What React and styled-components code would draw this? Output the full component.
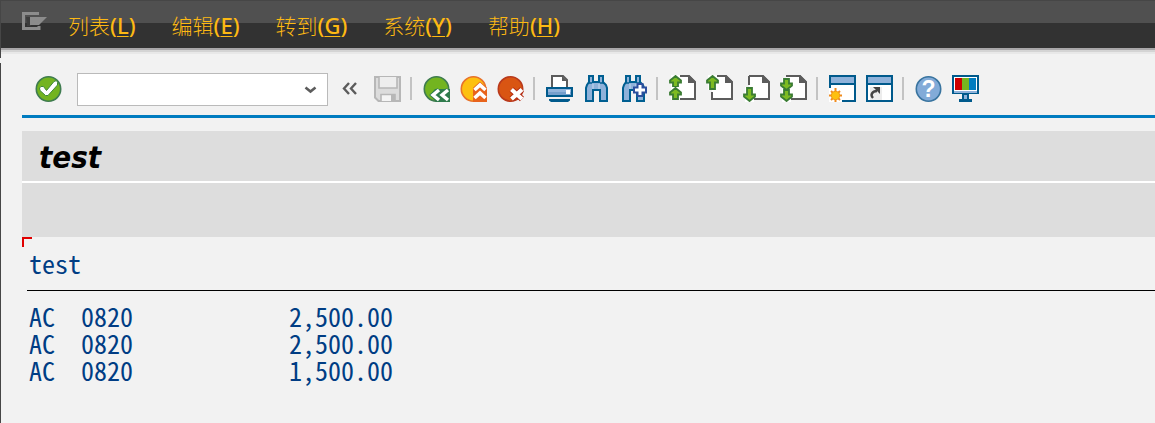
import React from "react";
import styled, { createGlobalStyle } from "styled-components";

const GlobalStyle = createGlobalStyle`
    * {
        box-sizing: border-box;
    }
    body {
        margin: 0;
        background: #f2f2f2;
    }
`;

const Window = styled.div`
    display: flex;
    flex-direction: column;
    gap: 5px;
    min-height: 100vh;
    overflow: hidden;
`;

const Top = styled.header`
    padding-bottom: 10px;
    border-left: 1px solid #464646;
`;

const MenuBar = styled.nav`
    display: flex;
    align-items: center;
    gap: 36px;
    height: 48px;
    padding: 2px 21px 0;
    border-top: 1px solid #464646;
    background: linear-gradient(#505050 22px, #323232 22px);
    box-shadow: 0 2px 0 #a9a7a9, 0 4px 0 #d4d4d4, 0 6px 0 #e8e8e8;
`;

const MenuButton = styled.button`
    padding: 0;
    border: 0;
    background: none;
    color: #fdb913;
    font: 300 21px/28px "Noto Sans", "Noto Sans CJK SC", sans-serif;
    white-space: nowrap;
`;

const Latin = styled.span`
    font-size: 22px;
    font-weight: 500;
`;

const AccessKey = styled.span`
    text-decoration: underline;
    text-decoration-thickness: 1px;
    text-underline-offset: 2px;
`;

const LogoButton = styled.button`
    display: flex;
    width: 25px;
    margin-right: -15px;
    padding: 0 0 10px;
    border: 0;
    background: none;
`;

const Main = styled.main`
    flex: 1;
    border-left: 1px solid #464646;
`;

const Toolbar = styled.div`
    display: flex;
    align-items: center;
    margin-left: 21px;
    padding: 8px 0 9px 13px;
    border-bottom: 3px solid #007cc0;
`;

const IconGroup = styled.div`
    display: flex;
    gap: 10px;
`;

const IconButton = styled.button`
    display: flex;
    flex: none;
    padding: 0;
    border: 0;
    background: none;
`;

const Divider = styled.span`
    flex: none;
    width: 2px;
    height: 23px;
    margin: 0 11px 0 9px;
    background: #c3c3c3;
`;

const CommandBox = styled.div`
    display: flex;
    width: 251px;
    height: 33px;
    margin: 2px 14px 0 15px;
    border: 1px solid #bababa;
    background: #fff;
`;

const CommandInput = styled.input`
    flex: 1;
    min-width: 0;
    padding: 0 6px;
    border: 0;
    outline: 0;
    background: none;
    font: 18px "Noto Sans", sans-serif;
`;

const DropButton = styled(IconButton)`
    align-items: center;
    justify-content: center;
    width: 34px;
`;

const CollapseButton = styled(IconButton)`
    margin-right: 16px;
`;

const TitleBar = styled.div`
    display: flex;
    align-items: center;
    height: 50px;
    margin: 13px 0 0 21px;
    padding: 2px 0 0 17px;
    background: #ddd;
`;

const Title = styled.h1`
    margin: 0;
    color: #000;
    font: italic bold 31px/40px "DejaVu Sans Condensed", "DejaVu Sans", sans-serif;
`;

const ButtonBar = styled.div`
    height: 56px;
    margin-left: 21px;
    border-top: 2px solid #fff;
    background: #ddd;
`;

const Report = styled.section`
    margin-left: 21px;
    color: #003d84;
    font: 400 26px/27px "Noto Sans CJK SC", monospace;
    font-feature-settings: "hwid";
`;

const Cursor = styled.div`
    width: 10px;
    height: 10px;
    border: solid #e00000;
    border-width: 2px 0 0 2px;
`;

const Heading = styled.h2`
    margin: 0 0 0 5px;
    padding: 2px 2px 14px;
    border-bottom: 1px solid #000;
    font: inherit;
`;

const List = styled.table`
    margin: 11px 0 0 7px;
    border-collapse: collapse;
    table-layout: fixed;
    width: 364px;
`;

const Cell = styled.td`
    width: ${props => props.$width}px;
    padding: 0;
    text-align: ${props => props.$align || "left"};
    white-space: nowrap;
`;

const menus = [
    { label: "列表", hotkey: "L" },
    { label: "编辑", hotkey: "E" },
    { label: "转到", hotkey: "G" },
    { label: "系统", hotkey: "Y" },
    { label: "帮助", hotkey: "H" },
];

const rows = [
    { type: "AC", code: "0820", amount: "2,500.00" },
    { type: "AC", code: "0820", amount: "2,500.00" },
    { type: "AC", code: "0820", amount: "1,500.00" },
];

const Icon = ({ children }) => (
    <svg width="27" height="27" viewBox="0 0 27 27" aria-hidden="true">{children}</svg>
);

const Disc = ({ fill, stroke }) => (
    <circle cx="13.5" cy="14" r="12.2" fill={fill} stroke={stroke} strokeWidth="1.6" />
);

// white stroke with a coloured rim, used on the round icons
const Rimmed = ({ d, rim, rimWidth = 6, width = 3 }) => (
    <g fill="none">
        <path d={d} stroke={rim} strokeWidth={rimWidth} />
        <path d={d} stroke="#fff" strokeWidth={width} />
    </g>
);

const OkIcon = () => (
    <Icon>
        <Disc fill="#73b420" stroke="#3f7c50" />
        <path d="M4.5 13 6 11.5H8.5L11.5 15.5 19 6.5 21.5 5.5 22.5 7.5V10L13 20.5H10.5L5 15.5Z" fill="#fff" stroke="#3f8a38" strokeWidth="1" />
    </Icon>
);

const SaveIcon = () => (
    <Icon>
        <path d="M1 2H26V26H4.5L1 22.5Z" fill="#dcdcdc" stroke="#b7b7b7" strokeWidth="2" />
        <path d="M5 2V13H23V2" fill="#eee" stroke="#b7b7b7" strokeWidth="1.6" />
        <path d="M7 26V19.5H21V26" fill="#f4f4f4" stroke="#b7b7b7" strokeWidth="1.6" />
        <path d="M17 19.5H21V26H17Z" fill="#b7b7b7" />
    </Icon>
);

const BackIcon = () => (
    <Icon>
        <Disc fill="#73b420" stroke="#3f7c50" />
        <path d="M12 14H27V27H13L7 20Z" fill="#2f7b4c" />
        <Rimmed d="M16 15 10 20 16 25M25 15 19 20 25 25" rim="#2f7b4c" rimWidth={5} width={3.4} />
    </Icon>
);

const ExitIcon = () => (
    <Icon>
        <Disc fill="#fdc010" stroke="#e8722a" />
        <path d="M13 13 20 7 27 13V27H13Z" fill="#e8641c" />
        <Rimmed d="M14.5 15 20 10 25.5 15M14.5 23 20 18 25.5 23" rim="#e8641c" rimWidth={5} width={3.6} />
    </Icon>
);

const CancelIcon = () => (
    <Icon>
        <Disc fill="#d95513" stroke="#b93a1c" />
        <Rimmed d="M14.5 14.5 25 24M25 14.5 14.5 24" rim="#b32a12" rimWidth={6} width={4.2} />
    </Icon>
);

const PrintIcon = () => (
    <Icon>
        <path d="M6 13V1H17L21 5V13" fill="#fff" stroke="#5c5c5c" strokeWidth="2" />
        <path d="M16 1V6H21Z" fill="#5c5c5c" />
        <rect x="1" y="13" width="25" height="8" fill="#93b5dc" stroke="#005a8c" strokeWidth="2" />
        <rect x="2" y="17" width="23" height="3" fill="#759fcc" />
        <rect x="20" y="15" width="4" height="4" fill="#fff" />
        <path d="M3 24H24V25.5L22 27H5L3 25.5Z" fill="#005a8c" />
    </Icon>
);

const Binoculars = () => (
    <g>
        <path d="M6 1H10V7H16V1H20V7L23 10 24 13V26H17V15H10V26H3V13L4 10 6 7Z" fill="#8fb2da" stroke="#005f91" strokeWidth="2" />
        <path d="M5 8H9M17 8H21" stroke="#005f91" strokeWidth="1.4" />
        <path d="M10 14V9M16 14V9" stroke="#b7cfe9" strokeWidth="1.4" />
    </g>
);

const FindIcon = () => <Icon><Binoculars /></Icon>;

const FindNextIcon = () => (
    <Icon>
        <Binoculars />
        <path d="M17.5 9H22.5V12.5H26V17.5H22.5V21H17.5V17.5H14V12.5H17.5Z" fill="#fff" stroke="#2c4f9e" strokeWidth="2" />
    </Icon>
);

const Arrow = ({ y, length, down }) => {
    const tail = length - 1;
    return (
        <path
            transform={down ? `translate(0 ${y + length}) scale(1 -1)` : `translate(0 ${y})`}
            d={`M6.5 1 12 5.5V7.5H9V${tail}H4V7.5H1V5.5Z`}
            fill="#7dbb22"
            stroke="#3a7c33"
            strokeWidth="1.8"
        />
    );
};

const PageIcon = ({ edge, arrows }) => (
    <Icon>
        <path d="M6 1H20L26 7V24H6Z" fill="#fff" />
        <path d={`M6 1H20L26 7V24H6${edge}`} fill="none" stroke="#5c5c5c" strokeWidth="2" />
        <path d="M19 0V8H27V7L20 0Z" fill="#5c5c5c" />
        {arrows.map(([y, length, down]) => (
            <g key={y}>
                <rect x="2" y={y} width="9" height={length} fill="#fff" />
                <Arrow y={y} length={length} down={down} />
            </g>
        ))}
    </Icon>
);

const FirstPageIcon = () => <PageIcon edge="" arrows={[[0, 13], [12, 13]]} />;
const PrevPageIcon = () => <PageIcon edge="V17" arrows={[[0, 15]]} />;
const NextPageIcon = () => <PageIcon edge="M6 1V10" arrows={[[12, 15, true]]} />;
const LastPageIcon = () => <PageIcon edge="" arrows={[[3, 13, true], [14, 13, true]]} />;

const WindowFrame = () => (
    <g>
        <rect x="1" y="1" width="25" height="25" fill="#fff" stroke="#005a8c" strokeWidth="2" />
        <rect x="2" y="2" width="23" height="6" fill="#8fb2da" />
        <rect x="2" y="8" width="23" height="2" fill="#005a8c" />
    </g>
);

const NewSessionIcon = () => (
    <Icon>
        <WindowFrame />
        <rect x="0" y="13" width="13" height="14" fill="#fff" />
        <path d="M6.5 13V27M0 20.5H13M2 16 11 25M11 16 2 25" stroke="#f08a1c" strokeWidth="2" />
        <circle cx="6.5" cy="20.5" r="4.2" fill="#fdc010" stroke="#f49a18" />
    </Icon>
);

const ShortcutIcon = () => (
    <Icon>
        <WindowFrame />
        <rect x="4" y="12" width="12" height="13" fill="#ececec" />
        <path d="M7 23C4 20 6 16 11 16" fill="none" stroke="#444" strokeWidth="2.4" />
        <path d="M7 12H14V19Z" fill="#444" />
    </Icon>
);

const HelpIcon = () => (
    <Icon>
        <Disc fill="#82abd8" stroke="#39749f" />
        <text x="13.5" y="22" textAnchor="middle" fill="#fff" fontFamily="Liberation Sans" fontWeight="700" fontSize="23">?</text>
    </Icon>
);

const MonitorIcon = () => (
    <Icon>
        <rect x="1" y="1" width="25" height="17" fill="#fff" stroke="#005a8c" strokeWidth="2" />
        <rect x="2" y="16" width="23" height="2" fill="#8fb2da" />
        <rect x="3" y="3" width="7" height="12" fill="#cc0000" />
        <rect x="10" y="3" width="7" height="12" fill="#76b51f" />
        <rect x="17" y="3" width="7" height="12" fill="#007cc0" />
        <path d="M10 19H17V24H20V27H7V24H10Z" fill="#005a8c" />
        <path d="M12 20H15V24H12Z" fill="#8fb2da" />
    </Icon>
);

const toolGroups = [
    [
        { name: "Back", icon: BackIcon },
        { name: "Exit", icon: ExitIcon },
        { name: "Cancel", icon: CancelIcon },
    ],
    [
        { name: "Print", icon: PrintIcon },
        { name: "Find", icon: FindIcon },
        { name: "Find next", icon: FindNextIcon },
    ],
    [
        { name: "First page", icon: FirstPageIcon },
        { name: "Previous page", icon: PrevPageIcon },
        { name: "Next page", icon: NextPageIcon },
        { name: "Last page", icon: LastPageIcon },
    ],
    [
        { name: "New session", icon: NewSessionIcon },
        { name: "Create shortcut", icon: ShortcutIcon },
    ],
    [
        { name: "Help", icon: HelpIcon },
        { name: "Customize layout", icon: MonitorIcon },
    ],
];

const App = () => (
    <Window>
        <GlobalStyle />
        <Top>
            <MenuBar>
                <LogoButton type="button" aria-label="Menu">
                    <svg width="25" height="18" viewBox="0 0 25 18" aria-hidden="true">
                        <path d="M17 1.5H1.5V16.5H17V14" fill="none" stroke="#8c8c8c" strokeWidth="3" />
                        <path d="M4 5H9V14H5Z" fill="#3c3c3c" />
                        <path d="M8 5H25L17 13H8Z" fill="#8c8c8c" />
                    </svg>
                </LogoButton>
                {menus.map(menu => (
                    <MenuButton type="button" key={menu.hotkey}>
                        {menu.label}
                        <Latin>(<AccessKey>{menu.hotkey}</AccessKey>)</Latin>
                    </MenuButton>
                ))}
            </MenuBar>
        </Top>
        <Main>
            <Toolbar>
                <IconButton type="button" aria-label="Enter"><OkIcon /></IconButton>
                <CommandBox>
                    <CommandInput type="text" aria-label="Command" />
                    <DropButton type="button" aria-label="Command history">
                        <svg width="13" height="8" viewBox="0 0 13 8" aria-hidden="true">
                            <path d="M1.5 1.5 6.5 5.5 11.5 1.5" fill="none" stroke="#5c5c5c" strokeWidth="2.6" />
                        </svg>
                    </DropButton>
                </CommandBox>
                <CollapseButton type="button" aria-label="Hide command field">
                    <svg width="16" height="13" viewBox="0 0 16 13" aria-hidden="true">
                        <path d="M7 1 2 6.5 7 12M14 1 9 6.5 14 12" fill="none" stroke="#5c5c5c" strokeWidth="2.4" />
                    </svg>
                </CollapseButton>
                <IconButton type="button" aria-label="Save"><SaveIcon /></IconButton>
                {toolGroups.map((group, i) => (
                    <React.Fragment key={i}>
                        <Divider />
                        <IconGroup>
                            {group.map(({ name, icon: Glyph }) => (
                                <IconButton type="button" key={name} aria-label={name}><Glyph /></IconButton>
                            ))}
                        </IconGroup>
                    </React.Fragment>
                ))}
            </Toolbar>
            <TitleBar>
                <Title>test</Title>
            </TitleBar>
            <ButtonBar />
            <Report>
                <Cursor />
                <Heading>test</Heading>
                <List>
                    <tbody>
                        {rows.map((row, i) => (
                            <tr key={i}>
                                <Cell $width={52}>{row.type}</Cell>
                                <Cell $width={52}>{row.code}</Cell>
                                <Cell $width={260} $align="right">{row.amount}</Cell>
                            </tr>
                        ))}
                    </tbody>
                </List>
            </Report>
        </Main>
    </Window>
);

export default App;
